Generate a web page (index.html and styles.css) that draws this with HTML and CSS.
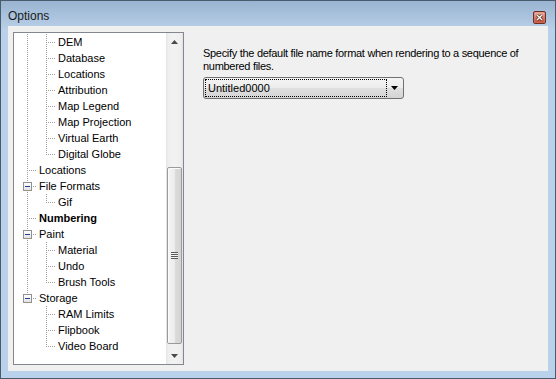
FILE: index.html
```html
<!DOCTYPE html>
<html lang="en">
<head>
    <meta charset="UTF-8">
    <meta name="viewport" content="width=device-width, initial-scale=1.0">
    <title>Options</title>
    <link rel="stylesheet" href="styles.css">
</head>
<body>

<div class="window">
    <div class="titlebar">
        <span class="title">Options</span>
        <div class="close">
            <svg width="13" height="13" viewBox="0 0 13 13">
                <rect x="0.5" y="0.5" width="12" height="12" rx="1.5" fill="#d9826f" stroke="#6b2f25"/>
                <rect x="1.5" y="1.5" width="10" height="10" rx="1" fill="url(#closeGrad)"/>
                <defs>
                    <linearGradient id="closeGrad" x1="0" y1="0" x2="0" y2="1">
                        <stop offset="0" stop-color="#eab3a6"/>
                        <stop offset="0.5" stop-color="#d47a66"/>
                        <stop offset="1" stop-color="#c24a34"/>
                    </linearGradient>
                </defs>
                <path d="M4 4 L9 9 M9 4 L4 9" stroke="#4a2018" stroke-width="2.6"/>
                <path d="M4 4 L9 9 M9 4 L4 9" stroke="#ffffff" stroke-width="1.4"/>
            </svg>
        </div>
    </div>

    <div class="client">
        <div class="tree">
            <div class="tree-items">
                <div class="row"><span class="g pipe"></span><span class="g tee"></span><span class="label">DEM</span></div>
                <div class="row"><span class="g pipe"></span><span class="g tee"></span><span class="label">Database</span></div>
                <div class="row"><span class="g pipe"></span><span class="g tee"></span><span class="label">Locations</span></div>
                <div class="row"><span class="g pipe"></span><span class="g tee"></span><span class="label">Attribution</span></div>
                <div class="row"><span class="g pipe"></span><span class="g tee"></span><span class="label">Map Legend</span></div>
                <div class="row"><span class="g pipe"></span><span class="g tee"></span><span class="label">Map Projection</span></div>
                <div class="row"><span class="g pipe"></span><span class="g tee"></span><span class="label">Virtual Earth</span></div>
                <div class="row"><span class="g pipe"></span><span class="g elbow"></span><span class="label">Digital Globe</span></div>
                <div class="row"><span class="g tee"></span><span class="label">Locations</span></div>
                <div class="row"><span class="g tee"><i class="expander"></i></span><span class="label">File Formats</span></div>
                <div class="row"><span class="g pipe"></span><span class="g elbow"></span><span class="label">Gif</span></div>
                <div class="row"><span class="g tee"></span><span class="label bold">Numbering</span></div>
                <div class="row"><span class="g tee"><i class="expander"></i></span><span class="label">Paint</span></div>
                <div class="row"><span class="g pipe"></span><span class="g tee"></span><span class="label">Material</span></div>
                <div class="row"><span class="g pipe"></span><span class="g tee"></span><span class="label">Undo</span></div>
                <div class="row"><span class="g pipe"></span><span class="g elbow"></span><span class="label">Brush Tools</span></div>
                <div class="row"><span class="g elbow"><i class="expander"></i></span><span class="label">Storage</span></div>
                <div class="row"><span class="g"></span><span class="g tee"></span><span class="label">RAM Limits</span></div>
                <div class="row"><span class="g"></span><span class="g tee"></span><span class="label">Flipbook</span></div>
                <div class="row"><span class="g"></span><span class="g elbow"></span><span class="label">Video Board</span></div>
            </div>

            <div class="scrollbar">
                <div class="sb-btn">
                    <svg width="7" height="4" viewBox="0 0 7 4"><polygon points="3.5,0 7,4 0,4" fill="#4a4a4a"/></svg>
                </div>
                <div class="sb-track">
                    <div class="sb-thumb"><span class="grip"></span></div>
                </div>
                <div class="sb-btn">
                    <svg width="7" height="4" viewBox="0 0 7 4"><polygon points="0,0 7,0 3.5,4" fill="#4a4a4a"/></svg>
                </div>
            </div>
        </div>

        <div class="pane">
            <p class="hint">Specify the default file name format when rendering to a sequence of numbered files.</p>
            <div class="combo">
                <span class="combo-value">Untitled0000</span>
                <span class="combo-arrow">
                    <svg width="7" height="4" viewBox="0 0 7 4"><polygon points="0,0 7,0 3.5,4" fill="#000"/></svg>
                </span>
            </div>
        </div>
    </div>
</div>

</body>
</html>
```

FILE: styles.css
```css
html, body {
    margin: 0;
}
body {
    font-family: "Liberation Sans", Arial, sans-serif;
    font-size: 11px;
    color: #000;
    background: #b9d1ea;
}
.window {
    width: 556px;
    height: 379px;
    box-sizing: border-box;
    border: 1px solid #4b5b6e;
    padding: 0 7px 7px 7px;
    background: linear-gradient(to bottom, #99b4d1 0, #b4cbe4 24px, #b9d1ea 30px);
    display: flex;
    flex-direction: column;
}

/* title bar */
.titlebar {
    height: 25px;
    flex: none;
    display: flex;
    justify-content: space-between;
    align-items: flex-start;
}
.title {
    margin-top: 6px;
    font-size: 12px;
    line-height: 19px;
    color: #1a1a1a;
}
.close {
    margin-top: 10px;
    margin-right: 2px;
    width: 13px;
    height: 13px;
}
.close svg {
    display: block;
}

/* client area */
.client {
    flex: 1;
    background: #f0f0f0;
    display: flex;
    padding: 6px 0 6px 5px;
}

/* tree view */
.tree {
    width: 171px;
    box-sizing: border-box;
    border: 1px solid #828790;
    background: #fff;
    display: flex;
}
.tree-items {
    flex: 1;
    padding: 1px 0 0 4px;
    overflow: hidden;
}
.row {
    height: 16px;
    line-height: 16px;
    display: flex;
    white-space: nowrap;
}
.g {
    width: 19px;
    height: 16px;
    flex: none;
    position: relative;
}
.g.pipe::before,
.g.tee::before,
.g.elbow::before {
    content: "";
    position: absolute;
    left: 9px;
    top: 0;
    width: 1px;
    height: 16px;
    background: linear-gradient(to bottom, #a0a0a0 50%, transparent 50%);
    background-size: 1px 2px;
}
.g.elbow::before {
    height: 9px;
}
.g.tee::after,
.g.elbow::after {
    content: "";
    position: absolute;
    left: 10px;
    top: 8px;
    width: 9px;
    height: 1px;
    background: linear-gradient(to right, transparent 50%, #a0a0a0 50%);
    background-size: 2px 1px;
}
.expander {
    position: absolute;
    left: 5px;
    top: 4px;
    width: 9px;
    height: 9px;
    box-sizing: border-box;
    border: 1px solid #919191;
    background: linear-gradient(to bottom, #ffffff, #e2e2e2);
    z-index: 1;
}
.expander::after {
    content: "";
    position: absolute;
    left: 1px;
    top: 3px;
    width: 5px;
    height: 1px;
    background: #1c3f9c;
}
.label {
    padding-left: 2px;
}
.label.bold {
    font-weight: bold;
}

/* scrollbar */
.scrollbar {
    width: 17px;
    flex: none;
    display: flex;
    flex-direction: column;
    background: linear-gradient(to right, #e3e3e3 0, #eeeeee 2px, #f2f2f2 8px, #eeeeee 15px, #e3e3e3 17px);
}
.sb-btn {
    height: 17px;
    display: flex;
    align-items: center;
    justify-content: center;
}
.sb-btn svg {
    display: block;
}
.sb-track {
    flex: 1;
}
.sb-thumb {
    margin: 117px 1px 0 1px;
    height: 177px;
    box-sizing: border-box;
    border: 1px solid #9a9a9a;
    border-radius: 2px;
    background: linear-gradient(to right, #f4f4f4 0, #ececec 50%, #dcdcdc 50%, #d4d4d4 100%);
    box-shadow: inset 1px 1px 0 #fbfbfb;
    display: flex;
    align-items: center;
    justify-content: center;
}
.grip {
    width: 7px;
    height: 7px;
    background: linear-gradient(to bottom, #5a5a5a 50%, #f5f5f5 50%);
    background-size: 7px 2px;
}

/* right pane */
.pane {
    margin-left: 19px;
    width: 336px;
}
.hint {
    margin: 15px 0 0 0;
    line-height: 13px;
    letter-spacing: -0.3px;
}
.combo {
    margin-top: 4px;
    width: 201px;
    height: 22px;
    box-sizing: border-box;
    border: 1px solid #707070;
    border-radius: 3px;
    background: linear-gradient(to bottom, #f4f4f4 0, #ececec 50%, #e0e0e0 50%, #d4d4d4 100%);
    display: flex;
    align-items: stretch;
    padding: 1px;
}
.combo-value {
    width: 182px;
    box-sizing: border-box;
    border: 1px dotted #000;
    padding-left: 2px;
    line-height: 16px;
}
.combo-arrow {
    flex: 1;
    display: flex;
    align-items: center;
    justify-content: center;
}
.combo-arrow svg {
    display: block;
}
```
